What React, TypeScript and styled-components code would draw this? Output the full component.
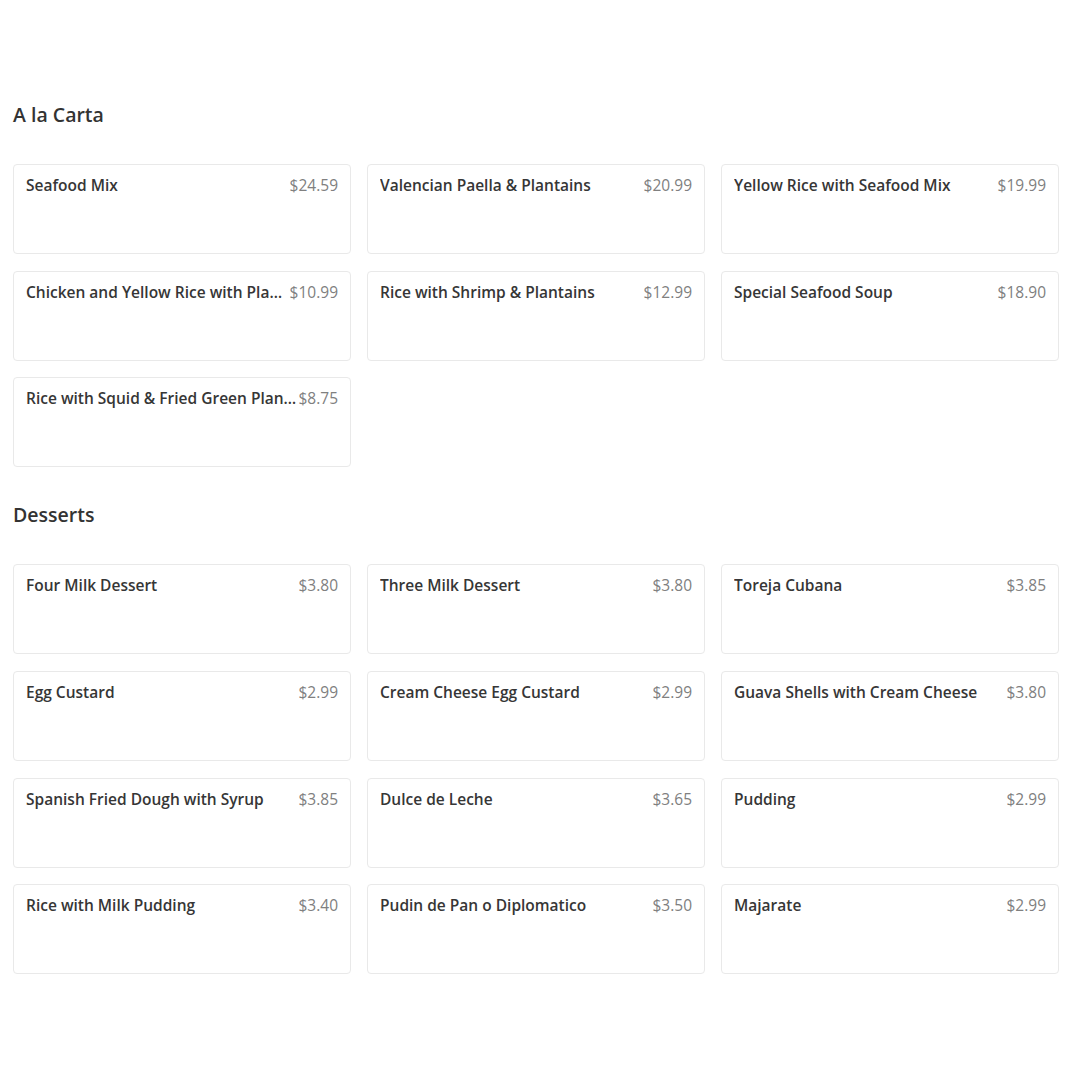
import React from "react";
import styled, { createGlobalStyle } from "styled-components";

const GlobalStyle = createGlobalStyle`
  body {
    margin: 0;
    background: #ffffff;
    font-family: "Open Sans", "Liberation Sans", sans-serif;
    color: #333333;
  }
`;

const Page = styled.div`
  width: 1046px;
  padding: 101px 0 40px 13px;
`;

const Section = styled.section`
  margin-bottom: 34px;
`;

const SectionTitle = styled.h2`
  margin: 0 0 35px;
  font-size: 19.5px;
  line-height: 28px;
  font-weight: 600;
  color: #333333;
`;

const Grid = styled.div`
  display: grid;
  grid-template-columns: repeat(3, minmax(0, 1fr));
  gap: 16.7px 16px;
`;

const Card = styled.div`
  height: 90px;
  box-sizing: border-box;
  padding: 9px 12px;
  border: 1px solid #e9e9e9;
  border-radius: 4px;
  background: #ffffff;
`;

const CardHead = styled.div`
  display: flex;
  align-items: baseline;
  justify-content: space-between;
`;

const ItemName = styled.span`
  flex: 1;
  min-width: 0;
  overflow: hidden;
  white-space: nowrap;
  text-overflow: ellipsis;
  font-size: 15.5px;
  line-height: 22px;
  font-weight: 600;
  color: #363636;
`;

const Price = styled.span`
  flex-shrink: 0;
  font-size: 15.5px;
  line-height: 22px;
  color: #808080;
`;

type Item = { name: string; price: string };

const MENU: { title: string; items: Item[] }[] = [
  {
    title: "A la Carta",
    items: [
      { name: "Seafood Mix", price: "$24.59" },
      { name: "Valencian Paella & Plantains", price: "$20.99" },
      { name: "Yellow Rice with Seafood Mix", price: "$19.99" },
      { name: "Chicken and Yellow Rice with Plantains", price: "$10.99" },
      { name: "Rice with Shrimp & Plantains", price: "$12.99" },
      { name: "Special Seafood Soup", price: "$18.90" },
      { name: "Rice with Squid & Fried Green Plantains", price: "$8.75" },
    ],
  },
  {
    title: "Desserts",
    items: [
      { name: "Four Milk Dessert", price: "$3.80" },
      { name: "Three Milk Dessert", price: "$3.80" },
      { name: "Toreja Cubana", price: "$3.85" },
      { name: "Egg Custard", price: "$2.99" },
      { name: "Cream Cheese Egg Custard", price: "$2.99" },
      { name: "Guava Shells with Cream Cheese", price: "$3.80" },
      { name: "Spanish Fried Dough with Syrup", price: "$3.85" },
      { name: "Dulce de Leche", price: "$3.65" },
      { name: "Pudding", price: "$2.99" },
      { name: "Rice with Milk Pudding", price: "$3.40" },
      { name: "Pudin de Pan o Diplomatico", price: "$3.50" },
      { name: "Majarate", price: "$2.99" },
    ],
  },
];

const App = () => {
  return (
    <>
      <GlobalStyle />
      <Page>
        {MENU.map((section) => (
          <Section key={section.title}>
            <SectionTitle>{section.title}</SectionTitle>
            <Grid>
              {section.items.map((item) => (
                <Card key={item.name}>
                  <CardHead>
                    <ItemName>{item.name}</ItemName>
                    <Price>{item.price}</Price>
                  </CardHead>
                </Card>
              ))}
            </Grid>
          </Section>
        ))}
      </Page>
    </>
  );
};

export default App;
